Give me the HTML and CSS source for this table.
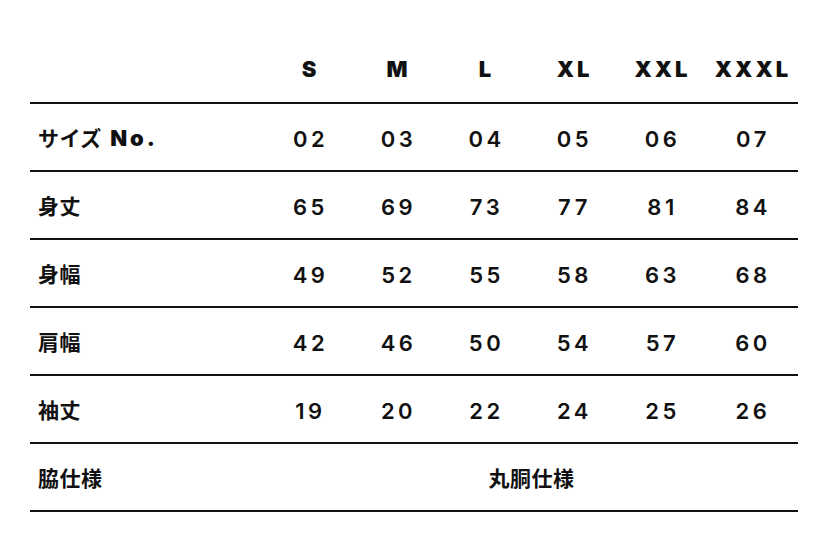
FILE: index.html
```html
<!DOCTYPE html>
<html lang="ja">
<head>
<meta charset="utf-8">
<link rel="stylesheet" href="styles.css">
</head>
<body>
<table class="size-table">
  <colgroup>
    <col class="c-label"><col class="c-size"><col class="c-size"><col class="c-size"><col class="c-size"><col class="c-size"><col class="c-last">
  </colgroup>
  <thead>
    <tr class="head">
      <th></th><th>S</th><th>M</th><th>L</th><th>XL</th><th>XXL</th><th>XXXL</th>
    </tr>
  </thead>
  <tbody>
    <tr><th class="label">サイズ <span class="latin">No.</span></th><td>02</td><td>03</td><td>04</td><td>05</td><td>06</td><td>07</td></tr>
    <tr><th class="label">身丈</th><td>65</td><td>69</td><td>73</td><td>77</td><td>81</td><td>84</td></tr>
    <tr><th class="label">身幅</th><td>49</td><td>52</td><td>55</td><td>58</td><td>63</td><td>68</td></tr>
    <tr><th class="label">肩幅</th><td>42</td><td>46</td><td>50</td><td>54</td><td>57</td><td>60</td></tr>
    <tr><th class="label">袖丈</th><td>19</td><td>20</td><td>22</td><td>24</td><td>25</td><td>26</td></tr>
    <tr><th class="label">脇仕様</th><td colspan="6" class="span">丸胴仕様</td></tr>
  </tbody>
</table>
</body>
</html>
```
FILE: styles.css
```css
html, body {
  margin: 0;
  padding: 0;
  background: #fff;
  color: #111;
}
body {
  padding: 36px 30px 0 30px;
}
.size-table {
  border-collapse: collapse;
  table-layout: fixed;
  width: 768px;
}
.c-label { width: 235px; }
.c-size { width: 88px; }
.c-last { width: 93px; }
.size-table th,
.size-table td {
  padding: 0;
  height: 66px;
  text-align: center;
  vertical-align: middle;
}
.size-table .head th {
  border-bottom: 2px solid #111;
  font-family: Inter, "Liberation Sans", sans-serif;
  font-weight: 900;
  font-size: 22px;
  letter-spacing: 3px;
  padding-left: 3px;
}
.size-table tbody tr {
  border-bottom: 2px solid #111;
}
.size-table tbody td {
  height: 62px;
  font-family: Inter, "Liberation Sans", sans-serif;
  font-weight: 600;
  font-size: 22px;
  letter-spacing: 3.5px;
  padding-left: 3px;
  padding-top: 4px;
}
.size-table th.label {
  text-align: left;
  padding-left: 8px;
  font-family: "Noto Sans CJK JP", sans-serif;
  font-weight: 700;
  font-size: 21px;
  letter-spacing: 0.5px;
}
.latin {
  font-family: Inter, "Liberation Sans", sans-serif;
  font-weight: 900;
  font-size: 22px;
  letter-spacing: 3px;
  margin-left: 3px;
}
.size-table td.span {
  height: 66px;
  font-family: "Noto Sans CJK JP", sans-serif;
  font-weight: 700;
  font-size: 21px;
  letter-spacing: 0.5px;
  padding-left: 0;
  padding-top: 0;
}
```
